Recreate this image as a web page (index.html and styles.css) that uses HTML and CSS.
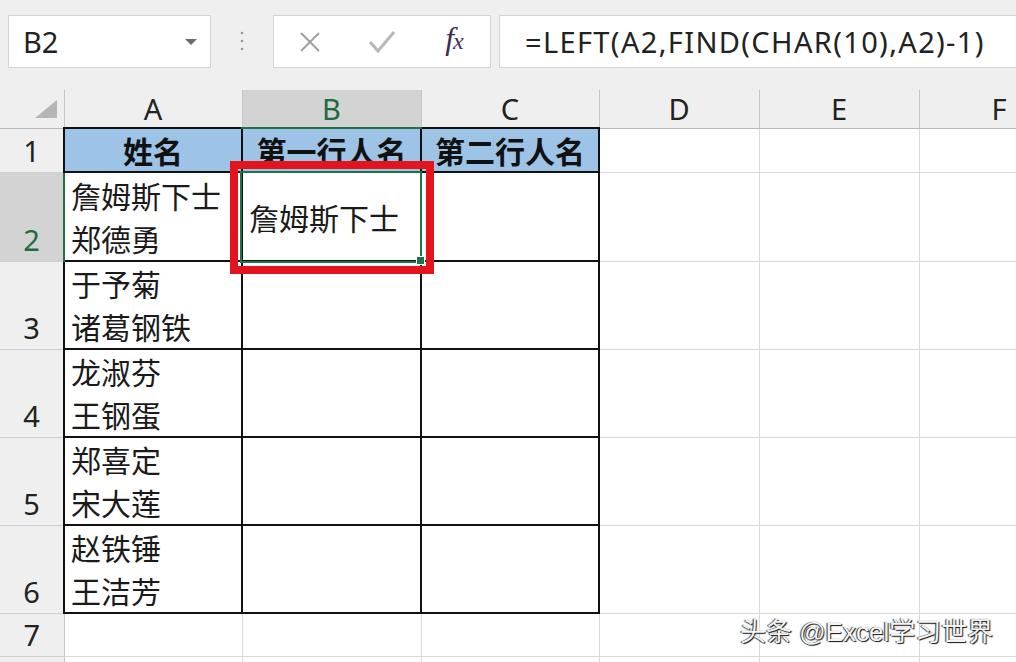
FILE: index.html
```html
<!DOCTYPE html>
<html lang="zh-CN">
<head>
  <meta charset="utf-8">
  <title>Excel - B2</title>
  <link rel="stylesheet" href="styles.css">
</head>
<body>

  <!-- formula bar -->
  <div class="toolbar">
    <div class="namebox">
      <span>B2</span>
      <svg class="caret" width="12" height="6" viewBox="0 0 12 6"><path d="M0 0h12L6 6z" fill="#6b6b6b"/></svg>
    </div>
    <div class="grip">
      <svg width="4" height="20" viewBox="0 0 4 20"><circle cx="2" cy="2" r="1.3" fill="#9a9a9a"/><circle cx="2" cy="10" r="1.3" fill="#9a9a9a"/><circle cx="2" cy="18" r="1.3" fill="#9a9a9a"/></svg>
    </div>
    <div class="fxbox">
      <span class="btn"><svg width="20" height="20" viewBox="0 0 20 20"><path d="M1 1L19 19M19 1L1 19" stroke="#9d9d9d" stroke-width="1.8" fill="none"/></svg></span>
      <span class="btn"><svg width="26" height="22" viewBox="0 0 26 22"><path d="M1 11L9 20L25 1" stroke="#b8b8b8" stroke-width="3" fill="none"/></svg></span>
      <span class="btn fx">f<i>x</i></span>
    </div>
    <div class="formula">=LEFT(A2,FIND(CHAR(10),A2)-1)</div>
  </div>

  <!-- worksheet -->
  <table class="sheet">
    <colgroup>
      <col class="c-row">
      <col class="c-a">
      <col class="c-b">
      <col class="c-c">
      <col class="c-d">
      <col class="c-e">
      <col class="c-f">
    </colgroup>
    <tr class="r-head">
      <th class="corner"><svg width="22" height="18" viewBox="0 0 22 18"><path d="M22 0V18H0z" fill="#b5b5b5"/></svg></th>
      <th class="col">A</th>
      <th class="col active">B</th>
      <th class="col">C</th>
      <th class="col">D</th>
      <th class="col">E</th>
      <th class="col">F</th>
    </tr>
    <tr class="r-1">
      <th class="row">1</th>
      <td class="d title">姓名</td>
      <td class="d title">第一行人名</td>
      <td class="d title">第二行人名</td>
      <td></td><td></td><td></td>
    </tr>
    <tr class="r-2">
      <th class="row active">2</th>
      <td class="d name">詹姆斯下士<br>郑德勇</td>
      <td class="d result">
        詹姆斯下士
        <div class="selection"></div>
        <div class="handle"></div>
        <div class="mark"></div>
      </td>
      <td class="d"></td>
      <td></td><td></td><td></td>
    </tr>
    <tr class="r-3">
      <th class="row">3</th>
      <td class="d name">于予菊<br>诸葛钢铁</td>
      <td class="d"></td>
      <td class="d"></td>
      <td></td><td></td><td></td>
    </tr>
    <tr class="r-4">
      <th class="row">4</th>
      <td class="d name">龙淑芬<br>王钢蛋</td>
      <td class="d"></td>
      <td class="d"></td>
      <td></td><td></td><td></td>
    </tr>
    <tr class="r-5">
      <th class="row">5</th>
      <td class="d name">郑喜定<br>宋大莲</td>
      <td class="d"></td>
      <td class="d"></td>
      <td></td><td></td><td></td>
    </tr>
    <tr class="r-6">
      <th class="row">6</th>
      <td class="d name">赵铁锤<br>王洁芳</td>
      <td class="d"></td>
      <td class="d"></td>
      <td></td><td></td><td></td>
    </tr>
    <tr class="r-7">
      <th class="row">7</th>
      <td></td><td></td><td></td><td></td><td></td><td></td>
    </tr>
    <tr class="r-8">
      <th class="row"></th>
      <td></td><td></td><td></td><td></td><td></td><td></td>
    </tr>
  </table>

  <div class="watermark">头条 @Excel学习世界</div>

</body>
</html>
```

FILE: styles.css
```css
:root {
  --bg: #efefef;
  --ui-border: #d3d3d3;
  --grid: #d9d9d9;
  --head-line: #c6c6c6;
  --green: #217346;
  --green-text: #1d6b40;
  --blue: #9dc3e6;
  --ink: #222;
}

* {
  box-sizing: border-box;
}

body {
  margin: 0;
  height: 662px;
  overflow: hidden;
  position: relative;
  background: var(--bg);
  color: var(--ink);
  font-family: 'Noto Sans', 'Noto Sans CJK SC', sans-serif;
}

/* formula bar */

.toolbar {
  display: flex;
  align-items: flex-start;
  height: 90px;
  padding: 15px 0 0 8px;
}

.namebox,
.fxbox,
.formula {
  height: 53px;
  background: #fff;
  border: 1px solid var(--ui-border);
}

.namebox {
  width: 203px;
  display: flex;
  align-items: center;
  justify-content: space-between;
  padding: 0 13px 0 14px;
  font-size: 29px;
}

.grip {
  width: 62px;
  height: 53px;
  display: flex;
  align-items: center;
  justify-content: center;
  padding-bottom: 1px;
}

.fxbox {
  width: 218px;
  display: grid;
  grid-template-columns: repeat(3, 1fr);
}

.btn {
  display: flex;
  align-items: center;
  justify-content: center;
}

.fx {
  font-family: 'Liberation Serif', serif;
  font-style: italic;
  font-size: 32px;
  color: #3d2e4f;
  padding: 0 0 6px 2px;
}

.fx i {
  font-size: 24px;
  position: relative;
  top: 3px;
  left: -1px;
}

.formula {
  flex: 1;
  margin-left: 8px;
  border-right: none;
  padding-left: 25px;
  display: flex;
  align-items: center;
  font-size: 29px;
  letter-spacing: 1.35px;
  white-space: nowrap;
}

/* worksheet */

.sheet {
  border-collapse: collapse;
  table-layout: fixed;
  width: 1079px;
  background: #fff;
}

.c-row { width: 64px; }
.c-a { width: 178px; }
.c-b { width: 179px; }
.c-c { width: 178px; }
.c-d { width: 160px; }
.c-e { width: 160px; }
.c-f { width: 160px; }

.r-head { height: 38px; }
.r-1 { height: 44px; }
.r-2 { height: 89px; }
.r-3 { height: 88px; }
.r-4 { height: 88px; }
.r-5 { height: 88px; }
.r-6 { height: 87px; }
.r-7 { height: 43px; }
.r-8 { height: 44px; }

th {
  background: var(--bg);
  font-weight: normal;
  font-size: 29px;
  padding: 0;
}

th.corner {
  border-right: 1px solid var(--head-line);
  border-bottom: 1px solid #b9b9b9;
  text-align: right;
  vertical-align: bottom;
  padding: 0 7px 10px 0;
}

th.corner svg {
  display: block;
  margin-left: auto;
}

th.col {
  border-right: 1px solid var(--head-line);
  border-bottom: 1px solid #b9b9b9;
  line-height: 36px;
}

th.row {
  border-right: 1px solid var(--head-line);
  border-bottom: 1px solid #cfcfcf;
  line-height: 42px;
  vertical-align: bottom;
}

th.active {
  background: #d3d3d3;
  color: var(--green-text);
}

th.col.active {
  border-bottom: 2px solid var(--green);
}

th.row.active {
  border-right: 2px solid var(--green);
}

td {
  border: 1px solid var(--grid);
  padding: 0 6px;
  font-size: 30px;
  line-height: 42px;
  font-family: 'Noto Sans CJK SC', sans-serif;
  color: #1a1a1a;
}

td.d {
  border: 2px solid #111;
}

td.title {
  background: var(--blue);
  font-weight: bold;
  text-align: center;
  color: #111;
}

td.name {
  vertical-align: bottom;
  line-height: 43px;
}

td.result {
  position: relative;
  vertical-align: middle;
}

/* selection frame, handle and the red callout */

.selection {
  position: absolute;
  left: -3px;
  top: -2px;
  right: -2px;
  bottom: -3px;
  border: 2px solid var(--green);
}

.handle {
  position: absolute;
  right: -5px;
  bottom: -5px;
  width: 9px;
  height: 9px;
  background: var(--green);
  border: 1px solid #fff;
}

.mark {
  position: absolute;
  left: -13px;
  top: -12px;
  width: 204px;
  height: 113px;
  border: 8px solid #e3141e;
}

.watermark {
  position: absolute;
  left: 740px;
  top: 611px;
  font-family: 'Liberation Sans', 'Noto Sans CJK SC', sans-serif;
  font-size: 26px;
  color: #f4f4f4;
  text-shadow: 1px 1px 1px #111, -1px 0 1px #333;
  white-space: nowrap;
}
```
